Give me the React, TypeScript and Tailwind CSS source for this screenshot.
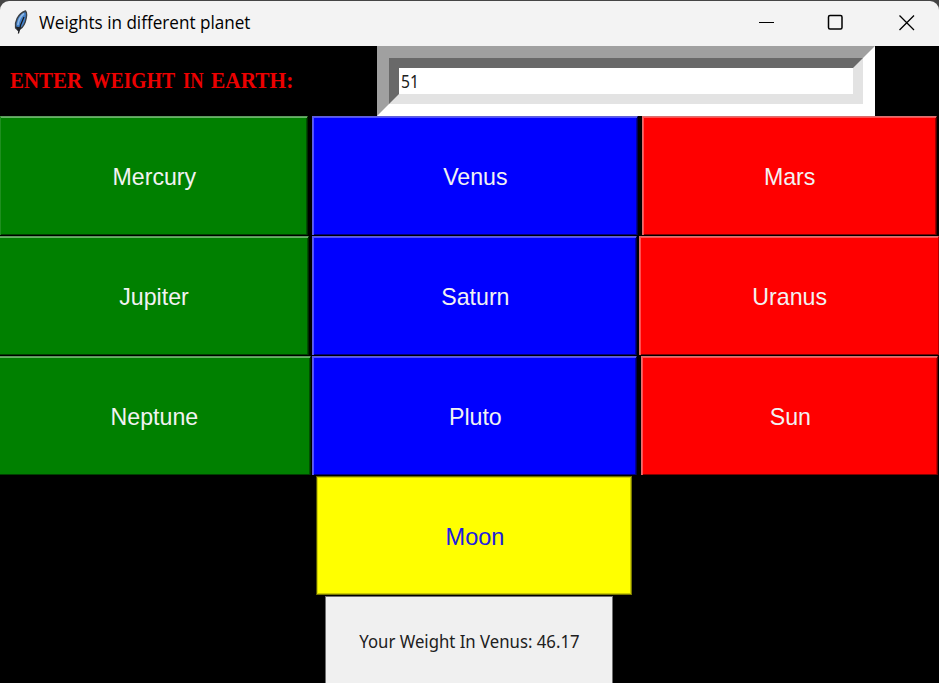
import React from "react";

type Planet = { name: string; cls: string };

const rows: Planet[][] = [
  [
    { name: "Mercury", cls: "w-[308px] bg-[#008000] border-l border-l-[#1f8f1f] border-t-[#5c9a5c] border-r-[#002800] shadow-[inset_0_1px_#66b366,inset_0_-1px_#004000,inset_-1px_0_#005000]" },
    { name: "Venus", cls: "ml-1 w-[326px] pl-px bg-[#0000ff] border-l border-l-[#6060e0] border-t-[#6060d8] border-r-[#000050] shadow-[inset_1px_1px_#5050ff,inset_0_-1px_#000080,inset_-1px_0_#0000a0]" },
    { name: "Mars", cls: "ml-1 w-[295px] pl-px bg-[#ff0000] border-l border-l-[#e07070] border-t-[#d87070] border-r-[#500000] shadow-[inset_1px_1px_#ff5050,inset_0_-1px_#800000,inset_-1px_0_#a00000]" },
  ],
  [
    { name: "Jupiter", cls: "w-[309px] bg-[#008000] border-t-[#5c9a5c] border-r-[#002800] shadow-[inset_0_1px_#66b366,inset_0_-1px_#004000,inset_-1px_0_#005000]" },
    { name: "Saturn", cls: "ml-[3px] w-[325px] pl-[2px] bg-[#0000ff] border-l border-l-[#6060e0] border-t-[#6060d8] border-r-[#000050] shadow-[inset_1px_1px_#5050ff,inset_0_-1px_#000080,inset_-1px_0_#0000a0]" },
    { name: "Uranus", cls: "ml-[2px] w-[300px] pl-[2px] bg-[#ff0000] border-l border-l-[#e07070] border-t-[#d87070] border-r-[#b00000] shadow-[inset_1px_1px_#ff5050,inset_0_-1px_#800000]" },
  ],
  [
    { name: "Neptune", cls: "w-[311px] pr-px bg-[#008000] border-t-[#5c9a5c] border-r-[#002800] shadow-[inset_0_1px_#66b366,inset_0_-1px_#004000,inset_-1px_0_#005000]" },
    { name: "Pluto", cls: "ml-px w-[325px] pl-[2px] bg-[#0000ff] border-l border-l-[#6060e0] border-t-[#6060d8] border-r-[#000050] shadow-[inset_1px_1px_#5050ff,inset_0_-1px_#000080,inset_-1px_0_#0000a0]" },
    { name: "Sun", cls: "ml-1 w-[297px] pl-[2px] bg-[#ff0000] border-l border-l-[#e07070] border-t-[#d87070] border-r-[#700000] shadow-[inset_1px_1px_#ff5050,inset_0_-1px_#800000,inset_-1px_0_#c00000]" },
  ],
];

function Feather() {
  return (
    <svg className="ml-[13px] h-[25px] w-[16px]" viewBox="0 0 16 25">
      <path d="M4.8 20 L2.6 18 C1.6 12 4.5 4 12.5 1 C14.3 3 13.8 7 12.2 12 C10.8 16 8.5 19 4.8 20Z" fill="#4382cc" stroke="#3b4045" strokeWidth="1.4" />
      <path d="M11 3.5 C7.5 6 5.5 11 4.8 15" fill="none" stroke="#8eb7e4" strokeWidth="1.6" />
      <path d="M11 7 C8.5 12 6.7 16 5.4 23.5" fill="none" stroke="#17191c" strokeWidth="1.3" />
      <path d="M2.5 16.5 L8.5 17.5 L5.5 22Z" fill="#20242a" />
    </svg>
  );
}

export default function App() {
  return (
    <div className="flex h-[683px] w-[939px] flex-col overflow-hidden bg-black font-['Liberation_Sans',sans-serif]">
      <div className="h-[46px] shrink-0 bg-[#454545] pt-px">
        <header className="flex h-[45px] items-center rounded-t-[9px] bg-[#f3f3f3] pb-[3px] text-black">
          <Feather />
          <h1 className="ml-[10px] w-[211px] origin-left scale-x-[.95] whitespace-nowrap font-['Open_Sans','Noto_Sans',sans-serif] text-[18px] leading-[24px]">Weights in different planet</h1>
          <svg className="ml-auto h-[18px] w-[160px]" viewBox="0 0 160 18" fill="none" stroke="#000" strokeWidth="1.3">
            <path d="M0 9.5H15" strokeWidth="1" />
            <rect x="69.5" y="2.5" width="13.5" height="13.5" rx="1.5" strokeWidth="1.5" />
            <path d="M140.5 2.5L155 17M155 2.5L140.5 17" />
          </svg>
          <div className="w-[20px]" />
        </header>
      </div>
      <div className="flex h-[70px] shrink-0">
        <div className="flex w-[377px] items-center pb-[3px] pl-[10px] font-['Liberation_Serif',serif] text-[24px] leading-[30px] font-bold whitespace-nowrap text-[#eb0000]">
          <span className="w-[81px] shrink-0"><span className="inline-block origin-left scale-x-[.872]">ENTER</span></span>
          <span className="w-[92px] shrink-0"><span className="inline-block origin-left scale-x-[.818]">WEIGHT</span></span>
          <span className="w-[28px] shrink-0"><span className="inline-block origin-left scale-x-[.77]">IN</span></span>
          <span className="w-[84px] shrink-0"><span className="inline-block origin-left scale-x-[.89]">EARTH:</span></span>
        </div>
        <div className="h-[70px] w-[498px] border-[12px] border-t-[#a0a0a0] border-r-white border-b-white border-l-[#a0a0a0]">
          <div className="flex h-[46px] items-center border-[10px] border-t-[#696969] border-r-[#e3e3e3] border-b-[#e3e3e3] border-l-[#696969] bg-white">
            <span className="ml-[2px] origin-left scale-x-[.87] font-['Noto_Sans',sans-serif] text-[18px] leading-[22px] text-[#202020]">51</span>
          </div>
        </div>
      </div>
      {rows.map((row, i) => (
        <div key={i} className="flex h-[120px] shrink-0">
          {row.map((p) => (
            <button key={p.name} className={"flex h-[119px] shrink-0 items-center justify-center border-t border-r text-[#f2f2f2] " + p.cls}>
              <span className="scale-x-[.965] pt-px text-[24px] leading-[28px]">{p.name}</span>
            </button>
          ))}
        </div>
      ))}
      <div className="flex h-[120px] shrink-0 pl-[316px]">
        <button className="h-[119px] w-[316px] border border-t-[#6b6b00] border-r-[#777700] border-b-[#777700] border-l-[#555500] bg-[#ffff00] text-[#2020df] shadow-[inset_1px_1px_#d0d000,inset_-1px_-1px_#c8c800]">
          <span className="ml-[2px] inline-block scale-x-[.98] pt-[3px] text-[24px] leading-[28px]">Moon</span>
        </button>
      </div>
      <div className="flex h-[87px] shrink-0 pl-[325px]">
        <div className="flex h-[90px] w-[288px] items-center justify-center border border-[#707070] bg-[#f0f0f0]">
          <span className="scale-x-[.93] whitespace-nowrap font-['Noto_Sans',sans-serif] text-[18px] leading-[24px] text-[#202020]">Your Weight In Venus: 46.17</span>
        </div>
      </div>
    </div>
  );
}
